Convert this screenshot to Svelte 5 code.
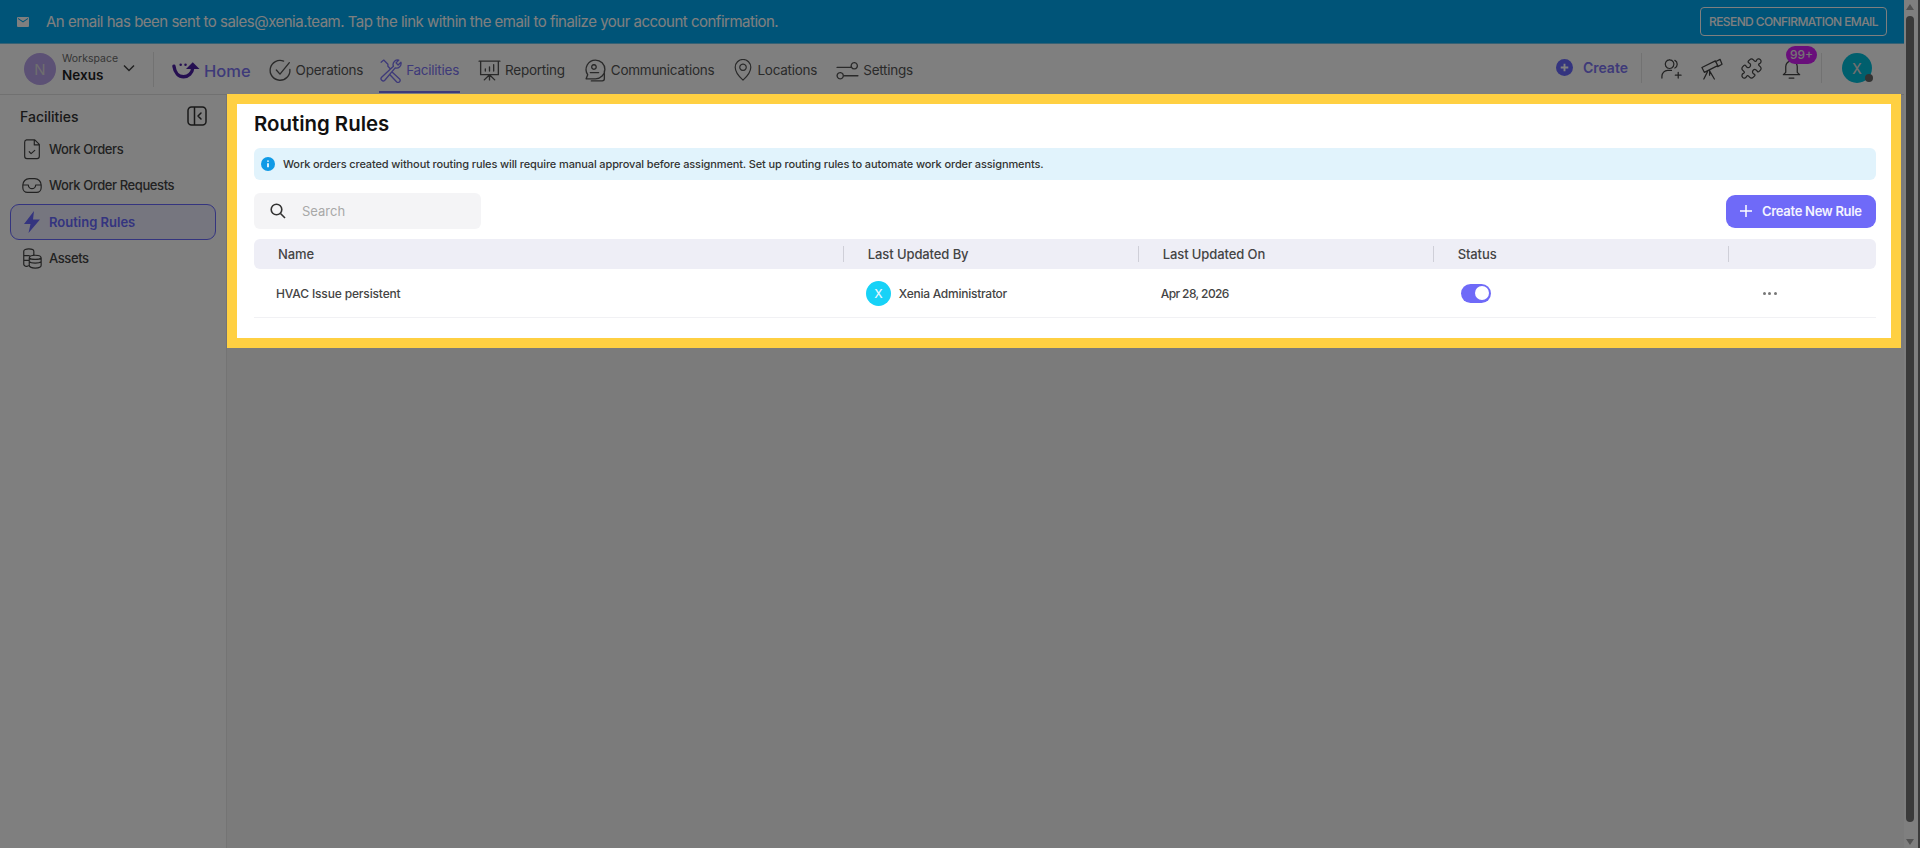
<script>
  const navItems = [
    { label: 'Operations', width: 25, d: 'M21 11a9.5 9.5 0 1 1-6-8 M8 11.5l3.5 4L20.5 4.5' },
    { label: 'Facilities', active: true, width: 25, d: 'M14.5 7a4.5 4.5 0 0 1 5.5-5l-2.7 2.7 2 2L22 4a4.5 4.5 0 0 1-5.500 5.500L6.500 21.300a2 2 0 0 1-3-2.800L14.800 8z M3 4l2.500-2 4 4v2l2 2 M14 14l7 6.500a2 2 0 0 1-3 2.500l-6.500-7' },
    { label: 'Reporting', width: 25, d: 'M2 3h20 M3.500 3v13h17V3 M7 21l5-5 5 5 M12 16v5 M8 12.500v-2 M12 12.500V8.500 M16 12.500V6.500' },
    { label: 'Communications', width: 25, d: 'M12 2a9 9 0 0 0-7.500 14L3 20h9a9 9 0 0 0 0-18z M10.500 6.500a2.200 2.200 0 1 0 .01 0 M7 14h8 M20.500 12.500V20a2 2 0 0 1-2 2H8' },
    { label: 'Locations', width: 22, d: 'M12 23s8.500-7.500 8.500-14a8.500 8.500 0 0 0-17 0c0 6.500 8.500 14 8.500 14z M12 5.500a3.500 3.500 0 1 0 .01 0' },
    { label: 'Settings', width: 25, d: 'M2 9h13 M9 17h13 M18.500 4.500a3 3 0 1 0 .01 0 M5 14a3 3 0 1 0 .01 0' }
  ];
  const sideItems = [
    { label: 'Work Orders', d: 'M6 2h9l5 5v13a2.500 2.500 0 0 1-2.500 2.500h-11A2.500 2.500 0 0 1 4 20V4.500A2.500 2.500 0 0 1 6 2z M14.500 2.500V7.500H20 M9 15l2 2 4-3.500' },
    { label: 'Work Order Requests', d: 'M2 15v-3a7 7 0 0 1 7-7h6a7 7 0 0 1 7 7v3a5 5 0 0 1-5 5H7a5 5 0 0 1-5-5z M2.500 12h5.500a4 4 0 0 0 8 0h5.500' },
    { label: 'Routing Rules', active: true, bolt: true, d: 'M14 1L4 14h6.500L8.500 23 20 9.500h-7z' },
    { label: 'Assets', d: 'M3 4.500a5.500 2.500 0 0 1 11 0v4 M3 4.500V19a3 2.500 0 0 0 5 1.500 M3 9.500h6 M3 14.500h5 M9 12a6.500 3 0 0 1 13 0v8a6.500 3 0 0 1-13 0z M9 16c2 2 11 2 13 0 M9 12c2 2 11 2 13 0' }
  ];
  const headers = ['Name', 'Last Updated By', 'Last Updated On', 'Status', ''];
</script>

<div class="page">
  <div class="viewport">
    <header class="banner">
      <svg class="mail" viewBox="0 0 24 20" aria-hidden="true"><path d="M2 0h20a2 2 0 0 1 2 2v16a2 2 0 0 1-2 2H2a2 2 0 0 1-2-2V2a2 2 0 0 1 2-2zm10 11L22 4V2L12 8.500 2 2v2z" /></svg>
      <span class="banner-text">An email has been sent to sales@xenia.team. Tap the link within the email to finalize your account confirmation.</span>
      <button class="resend">RESEND CONFIRMATION EMAIL</button>
    </header>

    <nav class="nav">
      <div class="workspace">
        <div class="ws-avatar">N</div>
        <div class="ws-text"><span class="ws-label">Workspace</span><span class="ws-name">Nexus</span></div>
        <svg class="ws-chevron" viewBox="0 0 12 8" aria-hidden="true"><path d="M1 1.500l5 5 5-5" /></svg>
      </div>
      <div class="home">
        <svg class="logo" viewBox="0 0 29 17" aria-hidden="true">
          <path class="logo-arc" d="M2 4c1 7 5 11 10 11 5 0 9-4 9.500-9" />
          <circle cx="9" cy="2.500" r="1.300" /><circle cx="14" cy="2.500" r="1.300" />
          <path d="M21.500 0L28.500 7h-14z" />
        </svg>
        <span>Home</span>
      </div>
      <div class="nav-items">
        {#each navItems as item}
          <div class="nav-item" class:active={item.active}>
            <svg class="line-icon" style="width:{item.width}px;height:{item.width}px" viewBox="0 0 24 24" aria-hidden="true"><path d={item.d} /></svg>
            <span>{item.label}</span>
          </div>
        {/each}
      </div>
      <div class="nav-right">
        <div class="create">
          <svg viewBox="0 0 18 18" aria-hidden="true"><circle cx="9" cy="9" r="9" /><path d="M9 5v8M5 9h8" /></svg>
          <span>Create</span>
        </div>
        <div class="tools">
          <svg class="line-icon" viewBox="0 0 24 24" aria-hidden="true"><path d="M10 3a4.500 4.500 0 1 0 .01 0 M15.500 3.500a4.500 4.500 0 0 1 0 8 M2 22v-2a6 6 0 0 1 6-6h4 M19 16v6 M16 19h6" /></svg>
          <svg class="line-icon" viewBox="0 0 24 24" aria-hidden="true"><path d="M2 11l14-7 2.500 5-14 7z M16 5l5-2.500 2 5-4.500 2.500 M8 15l-4 8 M10 14.500l5 8.500 M10 14v5" /></svg>
          <svg class="line-icon" viewBox="0 0 24 24" aria-hidden="true"><path d="M19.439 7.85c-.049.322.059.648.289.878l1.568 1.568c.47.47.706 1.087.706 1.704s-.235 1.233-.706 1.704l-1.611 1.611a.98.98 0 0 1-.837.276c-.47-.07-.802-.48-.968-.925a2.501 2.501 0 1 0-3.214 3.214c.446.166.855.497.925.968a.979.979 0 0 1-.276.837l-1.61 1.61a2.404 2.404 0 0 1-1.705.707 2.402 2.402 0 0 1-1.704-.706l-1.568-1.568a1.026 1.026 0 0 0-.877-.29c-.493.074-.84.504-1.02.968a2.5 2.5 0 1 1-3.237-3.237c.464-.18.894-.527.967-1.02a1.026 1.026 0 0 0-.289-.877l-1.568-1.568A2.402 2.402 0 0 1 1.998 12c0-.617.236-1.234.706-1.704L4.23 8.77c.24-.24.581-.353.917-.303.515.077.877.528 1.073 1.01a2.5 2.5 0 1 0 3.259-3.259c-.482-.196-.933-.558-1.01-1.073-.05-.336.062-.676.303-.917l1.525-1.525A2.402 2.402 0 0 1 12 1.998c.617 0 1.234.236 1.704.706l1.568 1.568c.23.23.556.338.877.29.493-.074.84-.504 1.02-.968a2.5 2.5 0 1 1 3.237 3.237c-.464.18-.894.527-.967 1.02Z" /></svg>
          <div class="bell">
            <svg class="line-icon" viewBox="0 0 24 24" aria-hidden="true"><path d="M6 16V10a6 6 0 0 1 12 0v6l2.500 2.500h-17z M9.500 22h5" /></svg>
            <span class="badge">99+</span>
          </div>
        </div>
        <div class="user"><span>X</span><i class="dot"></i></div>
      </div>
    </nav>

    <div class="body">
      <aside class="sidebar">
        <div class="side-head">
          <span>Facilities</span>
          <svg class="line-icon" viewBox="0 0 20 20" aria-hidden="true"><path d="M4.500 1h11A3.500 3.500 0 0 1 19 4.500v11a3.500 3.500 0 0 1-3.500 3.500h-11A3.500 3.500 0 0 1 1 15.500v-11A3.500 3.500 0 0 1 4.500 1z M7.500 1v18 M14 7l-3 3 3 3" /></svg>
        </div>
        <ul class="side-list">
          {#each sideItems as item}
            <li class="side-item" class:active={item.active}>
              <svg class="line-icon" class:bolt={item.bolt} viewBox="0 0 24 24" aria-hidden="true"><path d={item.d} /></svg>
              <span>{item.label}</span>
            </li>
          {/each}
        </ul>
      </aside>

      <main class="main">
        <section class="card">
          <h1>Routing Rules</h1>
          <div class="info">
            <svg viewBox="0 0 14 14" aria-hidden="true"><circle cx="7" cy="7" r="7" /><path d="M7 6.200v4M7 3.500v1.300" /></svg>
            <span>Work orders created without routing rules will require manual approval before assignment. Set up routing rules to automate work order assignments.</span>
          </div>
          <div class="toolbar">
            <div class="search">
              <svg viewBox="0 0 16 16" aria-hidden="true"><circle cx="6.500" cy="6.500" r="5.300" /><path d="M10.500 10.500L15 15" /></svg>
              <span>Search</span>
            </div>
            <button class="primary">
              <svg viewBox="0 0 12 12" aria-hidden="true"><path d="M6 0v12M0 6h12" /></svg>
              Create New Rule
            </button>
          </div>
          <div class="table">
            <div class="row head">
              {#each headers as h, i}
                <div class="cell" class:sep={i < 4}>{h}</div>
              {/each}
            </div>
            <div class="row item">
              <div class="cell name">HVAC Issue persistent</div>
              <div class="cell by"><span class="mini">X</span>Xenia Administrator</div>
              <div class="cell date">Apr 28, 2026</div>
              <div class="cell"><span class="toggle"><i></i></span></div>
              <div class="cell dots"><i></i><i></i><i></i></div>
            </div>
          </div>
        </section>
      </main>
    </div>
  </div>

  <div class="scrollbar">
    <i class="arrow up"></i>
    <i class="thumb"></i>
    <i class="arrow down"></i>
  </div>

  <div class="overlay"></div>
</div>

<style>
  :global(body) { margin: 0; background: #fff; }
  * { box-sizing: border-box; }
  .page {
    position: relative;
    display: flex;
    width: 1920px;
    height: 848px;
    overflow: hidden;
    font-family: Inter, "Noto Sans", sans-serif;
    color: #1f1f1f;
    background: #fff;
  }
  .overlay { position: absolute; inset: 0; background: rgba(0, 0, 0, 0.5); z-index: 10; }
  .viewport { flex: 1; min-width: 0; display: flex; flex-direction: column; }

  .scrollbar { width: 16px; display: flex; flex-direction: column; align-items: center; padding: 4px 2px 3px 0; border-right: 2px solid #777; }
  .thumb { width: 8px; flex: 1; margin: 6px 0 17px; border-radius: 4px; background: #747474; }
  .arrow { width: 0; height: 0; border-left: 4px solid transparent; border-right: 4px solid transparent; }
  .arrow.up { border-bottom: 6px solid #a4a4a4; }
  .arrow.down { border-top: 6px solid #a4a4a4; }

  .banner {
    height: 44px;
    flex: none;
    display: flex;
    align-items: center;
    padding: 0 17px;
    background: #00a8f0;
    border-bottom: 1px solid #6cc4ea;
    color: #fff;
  }
  .mail { width: 12px; height: 10px; fill: #fff; flex: none; }
  .banner-text { margin-left: 17px; font-size: 15px; letter-spacing: -0.5px; }
  .resend {
    margin-left: auto;
    width: 187px;
    height: 29px;
    padding: 0;
    background: none;
    border: 1px solid #fff;
    border-radius: 4px;
    color: #fff;
    font: 500 12px Inter, sans-serif;
    letter-spacing: -0.6px;
  }

  .nav {
    height: 51px;
    flex: none;
    display: flex;
    align-items: center;
    background: #fff;
    border-bottom: 1px solid #e2e2e2;
  }
  .workspace { display: flex; align-items: center; height: 35px; width: 154px; padding-left: 24px; border-right: 1px solid #e4e4e4; flex: none; }
  .ws-avatar { width: 32px; height: 32px; border-radius: 50%; background: #b9a2ea; color: #ddd; display: grid; place-items: center; font-size: 15px; flex: none; }
  .ws-text { display: flex; flex-direction: column; margin-left: 6px; margin-top: -2px; }
  .ws-label { font-size: 10.500px; color: #6b6b6b; line-height: 15px; }
  .ws-name { font-size: 13.500px; font-weight: 600; line-height: 19px; }
  .ws-chevron { width: 12px; height: 8px; margin-left: 5px; margin-top: -3px; fill: none; stroke: #444; stroke-width: 1.500; }

  .home { display: flex; align-items: center; margin: 3px 0 0 18px; color: #7c74f2; font-size: 16.500px; font-weight: 500; flex: none; }
  .logo { width: 28px; height: 17px; margin-right: 4px; fill: #4b1fa3; }
  .logo-arc { fill: none; stroke: #4b1fa3; stroke-width: 3.500; stroke-linecap: round; }

  .nav-items { display: flex; align-items: stretch; height: 50px; margin-left: 9px; }
  .nav-item { display: flex; align-items: center; gap: 5px; padding: 2px 10px 0; font-size: 13.500px; letter-spacing: -0.25px; color: #555; position: relative; }
  .nav-item:first-child { padding-right: 7px; }
  .nav-item.active { color: #7c74f2; }
  .nav-item.active::after { content: ""; position: absolute; left: 9px; right: 9px; bottom: 1px; height: 2px; background: #7c74f2; }
  .line-icon { width: 20px; height: 20px; fill: none; stroke: currentColor; stroke-width: 1.500; stroke-linecap: round; stroke-linejoin: round; flex: none; }
  .nav-item .line-icon { margin: -2px; stroke-width: 1.300; }

  .nav-right { margin-left: auto; display: flex; align-items: center; height: 40px; padding-right: 32px; color: #444; }
  .create { display: flex; align-items: center; gap: 10px; padding-right: 13px; height: 30px; border-right: 1px solid #e4e4e4; color: #7c74f2; font-size: 14px; font-weight: 600; margin-top: -3px; }
  .create svg { width: 17px; height: 17px; fill: #6868fe; }
  .create svg path { stroke: #fff; stroke-width: 2; fill: none; }
  .tools { display: flex; gap: 17px; align-items: center; height: 30px; padding: 0 18px 0 18px; border-right: 1px solid #e4e4e4; margin-top: -2px; }
  .tools .line-icon { width: 23px; height: 23px; stroke-width: 1.300; }
  .bell { position: relative; width: 23px; height: 23px; }
  .badge {
    position: absolute; left: 6px; top: -11px; width: 31px; height: 18px;
    border-radius: 9px; background: #d31ef6; color: #e9e9e9; font-size: 12px; font-weight: 500;
    display: grid; place-items: center;
  }
  .user { position: relative; margin-left: 20px; width: 30px; height: 30px; border-radius: 50%; background: #00bedb; color: #ddd; display: grid; place-items: center; font-size: 14px; font-weight: 500; margin-top: -2px; }
  .dot { position: absolute; right: -1px; bottom: 1px; width: 8px; height: 8px; border-radius: 50%; background: #666; }

  .body { flex: 1; display: flex; min-height: 0; }
  .sidebar { width: 227px; flex: none; border-right: 1px solid #e8e8e8; padding: 11px 10px 0 10px; background: #fff; }
  .side-head { display: flex; align-items: center; justify-content: space-between; height: 20px; padding: 0 9px 0 10px; font-size: 14px; font-weight: 500; color: #333; }
  .side-list { list-style: none; margin: 5px 0 0; padding: 0; display: flex; flex-direction: column; }
  .side-item { display: flex; align-items: center; gap: 8px; height: 36.300px; padding: 0 12px; font-size: 13px; letter-spacing: -0.4px; color: #444; font-weight: 500; border: 1px solid transparent; border-radius: 9px; }
  .side-item.active { color: #6868fe; font-weight: 600; letter-spacing: 0; background: rgba(104, 104, 254, 0.12); border-color: #6868fe; }
  .side-item .line-icon { width: 22px; height: 22px; margin: 0 -2px; stroke-width: 1.300; }
  .side-item .bolt { width: 24px; height: 24px; margin: 0 -3px; fill: #6868fe; stroke: none; }

  .main { flex: 1; background: #f6f6f6; min-width: 0; }
  .card {
    position: relative;
    z-index: 20;
    width: 1674px;
    height: 254px;
    margin-top: -1px;
    background: #fff;
    border: 10px solid #ffd042;
    padding: 8px 15px 0 17px;
  }
  h1 { margin: 0; font-size: 20.400px; line-height: 24px; font-weight: 600; color: #111; }
  .info {
    display: flex; align-items: center; gap: 8px; height: 32px; margin-top: 12px; padding: 0 7px;
    background: #e1f3fc; border-radius: 6px; font-size: 11px; letter-spacing: -0.12px; font-weight: 500; color: #333;
  }
  .info svg { width: 14px; height: 14px; fill: #0f9ae6; flex: none; }
  .info svg path { stroke: #fff; stroke-width: 1.700; fill: none; }
  .toolbar { display: flex; align-items: center; justify-content: space-between; margin-top: 13px; height: 36px; }
  .search { width: 227px; height: 36px; background: #f4f4f6; border-radius: 6px; display: flex; align-items: center; padding-left: 16px; font-size: 13px; color: #a8a8a8; }
  .search svg { width: 16px; height: 16px; fill: none; stroke: #333; stroke-width: 1.600; margin-right: 16px; }
  .primary {
    width: 150px; height: 33px; display: flex; align-items: center; gap: 10px; padding: 0 0 0 14px;
    background: #6f6af8; border: 0; border-radius: 9px; color: #f4f4ff;
    font: 600 13px Inter, sans-serif; letter-spacing: -0.3px;
  }
  .primary svg { width: 12px; height: 12px; stroke: #fff; stroke-width: 1.500; fill: none; flex: none; }
  .table { margin-top: 10px; }
  .row { display: grid; grid-template-columns: 2fr 1fr 1fr 1fr 0.5fr; align-items: center; }
  .head { height: 30px; background: #eeeef6; border-radius: 6px; font-size: 13px; letter-spacing: -0.1px; font-weight: 500; color: #444; }
  .head .cell { padding-left: 24px; height: 16px; line-height: 16px; }
  .head .cell.sep { border-right: 1px solid #cfcfd8; }
  .item { height: 49px; border-bottom: 1px solid #f1f1f4; font-size: 12px; font-weight: 500; color: #444; }
  .item .cell { padding-left: 22px; }
  .name { letter-spacing: -0.15px; }
  .by { display: flex; align-items: center; gap: 8px; letter-spacing: -0.25px; }
  .date { letter-spacing: -0.6px; }
  .mini { width: 25px; height: 25px; border-radius: 50%; background: #17d2f7; color: #e8f7ff; display: grid; place-items: center; font-size: 12px; flex: none; }
  .toggle { display: block; position: relative; width: 30px; height: 19px; margin-left: 5px; border-radius: 10px; background: #6f6af8; }
  .toggle i { position: absolute; right: 2px; top: 2.500px; width: 14px; height: 14px; border-radius: 50%; background: #fff; }
  .item .dots { display: flex; gap: 2.500px; padding-left: 34px; }
  .dots i { width: 3px; height: 3px; border-radius: 50%; background: #777; }
</style>
